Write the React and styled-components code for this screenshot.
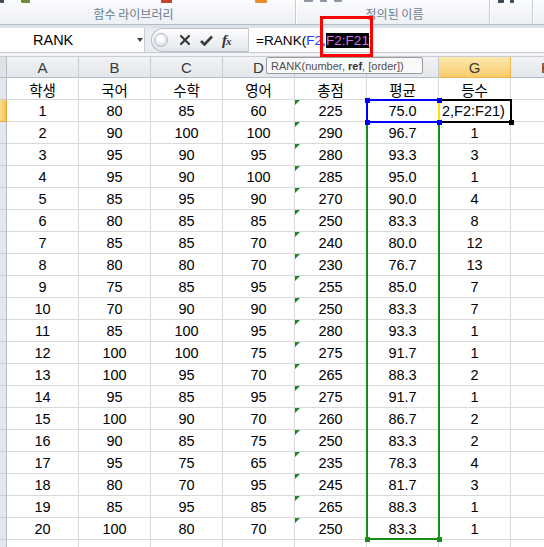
import React from 'react'
import styled, { createGlobalStyle } from 'styled-components'

const GlobalStyle = createGlobalStyle`
  html, body {
    margin: 0;
    padding: 0;
    background: #fff;
  }
  * {
    box-sizing: border-box;
  }
`

const ROW_H = 22
const HEAD_H = 21
const ROW_HEAD_W = 7
const COL_W = 72

const columns = ['A', 'B', 'C', 'D', 'E', 'F', 'G', 'H']

const rows = [
  ['학생', '국어', '수학', '영어', '총점', '평균', '등수'],
  ['1', '80', '85', '60', '225', '75.0', '2,F2:F21)'],
  ['2', '90', '100', '100', '290', '96.7', '1'],
  ['3', '95', '90', '95', '280', '93.3', '3'],
  ['4', '95', '90', '100', '285', '95.0', '1'],
  ['5', '85', '95', '90', '270', '90.0', '4'],
  ['6', '80', '85', '85', '250', '83.3', '8'],
  ['7', '85', '85', '70', '240', '80.0', '12'],
  ['8', '80', '80', '70', '230', '76.7', '13'],
  ['9', '75', '85', '95', '255', '85.0', '7'],
  ['10', '70', '90', '90', '250', '83.3', '7'],
  ['11', '85', '100', '95', '280', '93.3', '1'],
  ['12', '100', '100', '75', '275', '91.7', '1'],
  ['13', '100', '95', '70', '265', '88.3', '2'],
  ['14', '95', '85', '95', '275', '91.7', '1'],
  ['15', '100', '90', '70', '260', '86.7', '2'],
  ['16', '90', '85', '75', '250', '83.3', '2'],
  ['17', '95', '75', '65', '235', '78.3', '4'],
  ['18', '80', '70', '95', '245', '81.7', '3'],
  ['19', '85', '95', '85', '265', '88.3', '1'],
  ['20', '100', '80', '70', '250', '83.3', '1'],
  ['', '', '', '', '', '', ''],
]

const Page = styled.div`
  position: relative;
  width: 544px;
  height: 547px;
  overflow: hidden;
  background: #fff;
  font-family: "Liberation Sans", "Noto Sans CJK KR", sans-serif;
`

/* ribbon */
const Ribbon = styled.div`
  display: flex;
  height: 25px;
  background: linear-gradient(#fafbfd, #edf0f4);
  border-bottom: 1px solid #b4bcc7;
`

const RibbonGroup = styled.div`
  display: flex;
  flex-direction: column;
  justify-content: space-between;
  flex: none;
  width: ${p => p.$w}px;
  padding-left: ${p => p.$pl || 0}px;
  padding-right: ${p => p.$pr || 0}px;
  border-right: 1px solid #c6cdd6;
  box-shadow: 1px 0 0 #ffffff;
`

const StubRow = styled.div`
  display: flex;
  height: 4px;
`

const Stub = styled.span`
  display: block;
  width: ${p => p.$w}px;
  height: ${p => p.$h || 3}px;
  margin-left: ${p => p.$ml}px;
  background: ${p => p.$c};
  border-radius: 0 0 1px 1px;
`

const GroupLabel = styled.div`
  font-family: "Noto Sans CJK KR", sans-serif;
  font-size: 12px;
  line-height: 14px;
  color: #6b7b90;
  text-align: center;
  padding-bottom: 3px;
  white-space: nowrap;
`

const Strip = styled.div`
  height: ${p => p.$h}px;
  background: ${p => p.$bg};
  border-bottom: ${p => (p.$line ? `1px solid ${p.$line}` : 'none')};
`

/* formula bar */
const FormulaBar = styled.div`
  display: flex;
  height: 25px;
  background: #e9edf2;
  border-bottom: 1px solid #c3c9d1;
`

const NameBox = styled.div`
  display: flex;
  align-items: center;
  width: 145px;
  padding-left: 33px;
  background: #fff;
  border-right: 1px solid #c5cbd3;
  font-size: 14.5px;
  color: #000;
`

const DropArrow = styled.span`
  margin-left: auto;
  margin-right: 1px;
  width: 0;
  height: 0;
  border-left: 3.5px solid transparent;
  border-right: 3.5px solid transparent;
  border-top: 4px solid #444;
`

const ButtonGroup = styled.div`
  display: flex;
  align-items: center;
  width: 97px;
  margin-left: 6px;
  background: linear-gradient(#fdfdfe, #e3e7ec);
  border: 1px solid #b6bdc6;
  border-right: none;
  border-radius: 12px 0 0 12px;
`

const Knob = styled.span`
  width: 14px;
  height: 14px;
  margin-left: 2px;
  border-radius: 50%;
  border: 1px solid #b3b9c1;
  background: radial-gradient(circle at 45% 40%, #ffffff 0 25%, #dadde2 70%, #cdd1d6);
`

const IconSvg = styled.svg`
  display: block;
  margin-left: ${p => p.$ml}px;
`

const Fx = styled.span`
  margin-left: 9px;
  font-family: "Liberation Serif", serif;
  font-style: italic;
  font-weight: bold;
  font-size: 15px;
  color: #333;
  letter-spacing: -1px;
  & small {
    font-size: 11px;
  }
`

const FormulaInput = styled.div`
  flex: 1;
  display: flex;
  align-items: center;
  padding-left: 7px;
  background: #fff;
  border-left: 1px solid #c5cbd3;
  font-size: 13.6px;
  color: #000;
  white-space: nowrap;
`

const Ref = styled.span`
  color: ${p => p.$c};
  background: ${p => p.$bg || 'transparent'};
`

/* sheet */
const SheetWrap = styled.div`
  position: relative;
`

const Grid = styled.div`
  display: grid;
  grid-template-columns: ${ROW_HEAD_W}px repeat(${columns.length}, ${COL_W}px);
  grid-template-rows: ${HEAD_H}px;
  grid-auto-rows: ${ROW_H}px;
`

const Corner = styled.div`
  background: #dfe3e8;
  border-right: 1px solid #b5bcc5;
  border-bottom: 1px solid #b5bcc5;
`

const ColHead = styled.div`
  display: flex;
  align-items: center;
  justify-content: center;
  font-size: 15px;
  color: #3a3a3a;
  background: ${p => (p.$active ? 'linear-gradient(#fde8ad, #f7cc6c)' : 'linear-gradient(#f1f3f5, #e4e7eb)')};
  border-right: 1px solid ${p => (p.$active ? '#efb54a' : '#c7ccd3')};
  border-bottom: 1px solid ${p => (p.$active ? '#efb54a' : '#b5bcc5')};
`

const RowHead = styled.div`
  background: ${p => (p.$active ? 'linear-gradient(90deg, #fbdc8c, #f5c25a)' : '#e4e7eb')};
  border-right: 1px solid ${p => (p.$active ? '#e7a53a' : '#b5bcc5')};
  border-bottom: 1px solid ${p => (p.$active ? '#e7a53a' : '#c7ccd3')};
`

const Cell = styled.div`
  position: relative;
  display: flex;
  align-items: center;
  justify-content: ${p => (p.$left ? 'flex-start' : 'center')};
  padding-left: ${p => (p.$left ? '3px' : '0')};
  padding-top: 1px;
  font-size: 14.5px;
  color: #000;
  white-space: nowrap;
  overflow: hidden;
  border-right: 1px solid #d9d9d9;
  border-bottom: 1px solid #d9d9d9;

  &::before {
    content: '';
    display: ${p => (p.$flag ? 'block' : 'none')};
    position: absolute;
    left: 0;
    top: 0;
    border-top: 5px solid #1d8a1d;
    border-right: 5px solid transparent;
  }
`

const RangeBox = styled.div`
  position: absolute;
  border: 2px solid ${p => p.$c};
  border-right-color: ${p => p.$right || p.$c};
  pointer-events: none;
`

const Handle = styled.span`
  position: absolute;
  width: ${p => p.$s}px;
  height: ${p => p.$s}px;
  background: ${p => p.$c};
  ${p => (p.$top ? `top: -${p.$s / 2 + 1}px;` : `bottom: -${p.$s / 2 + 1}px;`)}
  ${p => (p.$lft ? `left: -${p.$s / 2 + 1}px;` : `right: -${p.$s / 2 + 1}px;`)}
`

/* overlays */
const Tooltip = styled.div`
  position: absolute;
  left: 266px;
  top: 57px;
  width: 157px;
  height: 17px;
  padding-left: 4px;
  display: flex;
  align-items: center;
  background: #f9f9f9;
  border: 1px solid #9c9c9c;
  border-radius: 2px;
  font-size: 11px;
  color: #505050;
  white-space: nowrap;
  & b {
    color: #333;
  }
`

const Callout = styled.div`
  position: absolute;
  left: 320px;
  top: 16px;
  width: 53px;
  height: 41px;
  border: 3px solid #ff0000;
  pointer-events: none;
`

const colLeft = c => ROW_HEAD_W + c * COL_W - 1
const rowTop = r => HEAD_H + r * ROW_H - 1

function Sheet() {
  const fCol = 5
  const gCol = 6
  return (
    <SheetWrap>
      <Grid>
        <Corner />
        {columns.map(c => (
          <ColHead key={c} $active={c === 'G'}>{c}</ColHead>
        ))}
        {rows.map((row, r) => (
          <React.Fragment key={r}>
            <RowHead $active={r === 1} />
            {row.map((v, c) => (
              <Cell key={c} $flag={c === 4 && r > 0 && r < 21} $left={r === 1 && c === gCol}>
                {v}
              </Cell>
            ))}
            <Cell />
          </React.Fragment>
        ))}
      </Grid>

      <RangeBox
        $c="#1a8c1a"
        style={{ left: colLeft(fCol), top: rowTop(1), width: COL_W + 2, height: ROW_H * 20 + 1 }}
      >
        <Handle $c="#1a8c1a" $s={5} $lft />
        <Handle $c="#1a8c1a" $s={5} />
      </RangeBox>

      <RangeBox
        $c="#000"
        style={{ left: colLeft(gCol), top: rowTop(1), width: COL_W + 2, height: ROW_H + 2 }}
      >
        <Handle $c="#000" $s={5} />
      </RangeBox>

      <RangeBox
        $c="#0000ff"
        $right="#ffe000"
        style={{ left: colLeft(fCol), top: rowTop(1), width: COL_W + 2, height: ROW_H + 2 }}
      >
        <Handle $c="#0000ff" $s={5} $top $lft />
        <Handle $c="#0000ff" $s={5} $lft />
        <Handle $c="#0000ff" $s={5} $top />
        <Handle $c="#0000ff" $s={5} />
      </RangeBox>
    </SheetWrap>
  )
}

export default function App() {
  return (
    <>
      <GlobalStyle />
      <Page>
        <Ribbon>
          <RibbonGroup $w={296} $pr={28}>
            <StubRow>
              <Stub $w={5} $ml={0} $c="#3d4a5c" />
              <Stub $w={10} $ml={17} $c="#6a8d3a" />
              <Stub $w={12} $ml={131} $c="#c2452b" />
              <Stub $w={14} $ml={83} $c="#e9902a" />
            </StubRow>
            <GroupLabel>함수 라이브러리</GroupLabel>
          </RibbonGroup>
          <RibbonGroup $w={194} $pl={4}>
            <StubRow>
              <Stub $w={9} $ml={4} $c="#8d96a2" $h={2} />
              <Stub $w={7} $ml={7} $c="#8d96a2" $h={2} />
              <Stub $w={8} $ml={7} $c="#8d96a2" $h={2} />
            </StubRow>
            <GroupLabel>정의된 이름</GroupLabel>
          </RibbonGroup>
          <RibbonGroup $w={43}>
            <StubRow>
              <Stub $w={6} $ml={8} $c="#3d4a5c" />
              <Stub $w={4} $ml={6} $c="#3d4a5c" />
            </StubRow>
          </RibbonGroup>
          <RibbonGroup $w={20} />
        </Ribbon>
        <Strip $h={3} $bg="#dde2e8" />
        <FormulaBar>
          <NameBox>
            RANK
            <DropArrow />
          </NameBox>
          <ButtonGroup>
            <Knob />
            <IconSvg $ml={12} width="10" height="10" viewBox="0 0 10 10">
              <path d="M1 1 L9 9 M9 1 L1 9" stroke="#3a3a3a" strokeWidth="2.2" strokeLinecap="square" />
            </IconSvg>
            <IconSvg $ml={10} width="13" height="11" viewBox="0 0 13 11">
              <path d="M1 6 L4.5 9.5 L12 1.5" stroke="#3a3a3a" strokeWidth="2.6" fill="none" />
            </IconSvg>
            <Fx>f<small>x</small></Fx>
          </ButtonGroup>
          <FormulaInput>
            =RANK(<Ref $c="#1f3cff">F2</Ref>,<Ref $c="#d36ee8" $bg="#000">F2:F21</Ref>)
          </FormulaInput>
        </FormulaBar>
        <Strip $h={4} $bg="#f2f4f7" $line="#c9ced5" />
        <Sheet />
        <Tooltip>
          RANK(number,&nbsp;<b>ref</b>, [order])
        </Tooltip>
        <Callout />
      </Page>
    </>
  )
}
